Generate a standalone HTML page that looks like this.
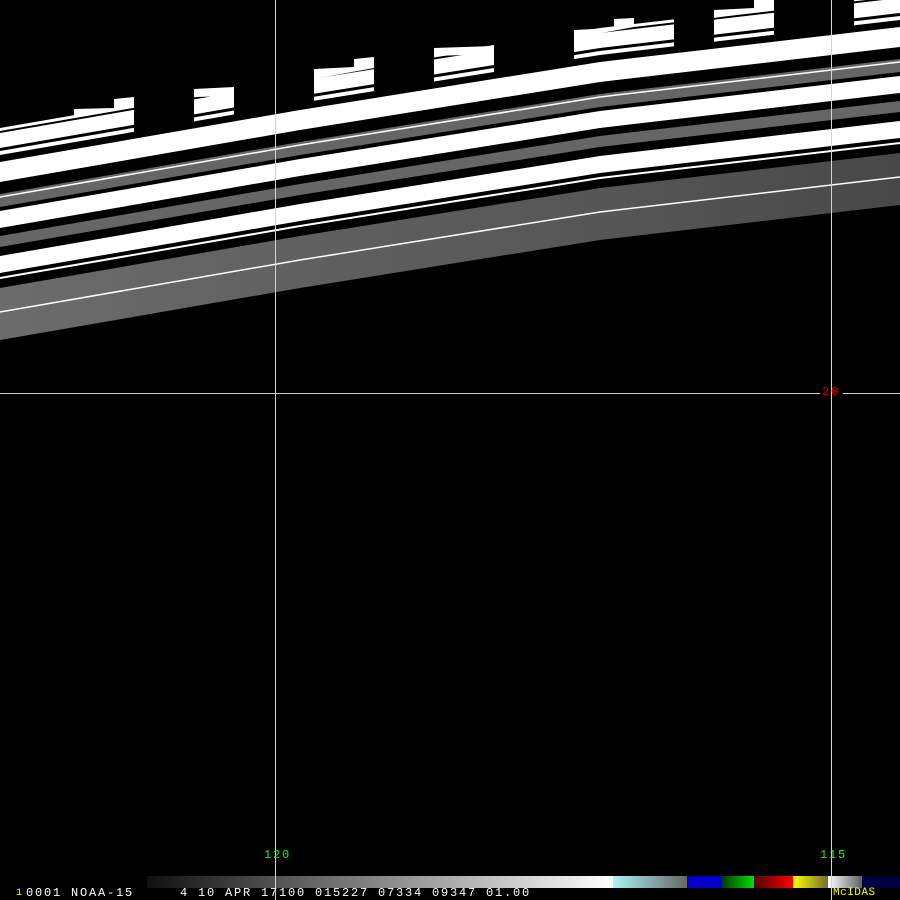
<!DOCTYPE html>
<html><head><meta charset="utf-8"><style>
html,body{margin:0;padding:0;background:#000;}
#c{position:relative;width:900px;height:900px;overflow:hidden;background:#000;}
.t{position:absolute;font-family:"Liberation Mono",monospace;font-size:12px;letter-spacing:1.8px;line-height:12px;white-space:pre;}
</style></head><body><div id="c">
<svg width="900" height="900" style="position:absolute;left:0;top:0">
<defs>
<linearGradient id="gg" x1="0" x2="1" y1="0" y2="0">
<stop offset="0" stop-color="#6c6c6c"/><stop offset="0.4" stop-color="#5e5e5e"/><stop offset="0.7" stop-color="#555"/><stop offset="1" stop-color="#484848"/>
</linearGradient>
<linearGradient id="cb1" x1="0" x2="1"><stop offset="0" stop-color="#101010"/><stop offset="1" stop-color="#ffffff"/></linearGradient>
<linearGradient id="cb2" x1="0" x2="1"><stop offset="0" stop-color="#a8f4f4"/><stop offset="1" stop-color="#666"/></linearGradient>
<linearGradient id="cb3" x1="0" x2="1"><stop offset="0" stop-color="#004000"/><stop offset="1" stop-color="#00e000"/></linearGradient>
<linearGradient id="cb4" x1="0" x2="1"><stop offset="0" stop-color="#500000"/><stop offset="1" stop-color="#ff0000"/></linearGradient>
<linearGradient id="cb5" x1="0" x2="1"><stop offset="0" stop-color="#ffff00"/><stop offset="1" stop-color="#707030"/></linearGradient>
<linearGradient id="cb6" x1="0" x2="1"><stop offset="0" stop-color="#ffffff"/><stop offset="1" stop-color="#606060"/></linearGradient>
<clipPath id="seg">
<rect x="0" y="0" width="134" height="400"/>
<rect x="194" y="0" width="40" height="400"/>
<rect x="314" y="0" width="60" height="400"/>
<rect x="434" y="0" width="60" height="400"/>
<rect x="574" y="0" width="100" height="400"/>
<rect x="714" y="0" width="60" height="400"/>
<rect x="854" y="0" width="46" height="400"/>
</clipPath>
</defs>
<!-- gray swath -->
<polygon fill="url(#gg)" points="0,288 300,236 600,188 900,153 900,205 600,240 300,288 0,340"/>
<polyline fill="none" stroke="#fff" stroke-width="1.5" points="0,312 300,260 600,212 900,177"/>
<polyline fill="none" stroke="#fff" stroke-width="2" points="0,278 300,226 600,178 900,143"/>
<polygon fill="#fff" points="0,256 300,204 600,156 900,121 900,138 600,173 300,221 0,273"/>
<polygon fill="#666" points="0,236 300,184 600,136 900,101 900,112 600,147 300,195 0,247"/>
<polygon fill="#fff" points="0,211 300,159 600,111 900,76 900,93 600,128 300,176 0,228"/>
<polygon fill="#666" points="0,194 300,142 600,94 900,59 900,72 600,107 300,155 0,207"/>
<polyline fill="none" stroke="#fff" stroke-width="1.5" points="0,197 300,145 600,97 900,62"/>
<polygon fill="#fff" points="0,162 300,110 600,62 900,27 900,47 600,82 300,130 0,182"/>
<g clip-path="url(#seg)">
<polygon fill="#fff" points="0,151 300,99 600,51 900,16 900,20 600,55 300,103 0,155"/>
<polygon fill="#fff" points="0,133 300,81 600,33 900,-2 900,13 600,48 300,96 0,148"/>
<polygon fill="#fff" points="0,128 300,76 600,28 900,-7 900,-4 600,31 300,79 0,131"/>
</g>
<!-- step blocks (raised parts) -->
<polygon fill="#fff" points="74,109 114,108 114,99 134,97 134,106 74,117"/>
<polygon fill="#fff" points="194,89 234,87 234,96 194,97"/>
<polygon fill="#fff" points="314,69 354,67 354,59 374,57 374,68 314,79"/>
<polygon fill="#fff" points="434,48 494,46 494,54 434,56"/>
<polygon fill="#fff" points="574,30 614,28 614,19 634,18 634,27 574,38"/>
<polygon fill="#fff" points="714,10 754,8 754,0 774,0 774,8 714,18"/>
<polygon fill="#fff" points="854,6 900,1 900,12 854,18"/>
<!-- grid -->
<line x1="275.5" y1="0" x2="275.5" y2="900" stroke="#b8e0e0" stroke-width="1"/>
<line x1="831.5" y1="0" x2="831.5" y2="900" stroke="#b8e0e0" stroke-width="1"/>
<line x1="0" y1="393.5" x2="820" y2="393.5" stroke="#b8e0e0" stroke-width="1"/>
<line x1="843" y1="393.5" x2="900" y2="393.5" stroke="#b8e0e0" stroke-width="1"/>
<!-- colorbar -->
<rect x="147" y="876" width="466" height="12" fill="url(#cb1)"/>
<rect x="613" y="876" width="74" height="12" fill="url(#cb2)"/>
<rect x="687" y="876" width="35" height="12" fill="#0000c8"/>
<rect x="722" y="876" width="32" height="12" fill="url(#cb3)"/>
<rect x="754" y="876" width="39" height="12" fill="url(#cb4)"/>
<rect x="793" y="876" width="35" height="12" fill="url(#cb5)"/>
<rect x="828" y="876" width="34" height="12" fill="url(#cb6)"/>
<rect x="862" y="876" width="38" height="12" fill="#000040"/>
<line x1="275.5" y1="862" x2="275.5" y2="888" stroke="#b8e0e0"/>
<line x1="831.5" y1="862" x2="831.5" y2="888" stroke="#b8e0e0"/>
</svg>
<div class="t" style="left:822px;top:386px;color:#e00000">20</div>
<div class="t" style="left:264px;top:849px;color:#00ff00">120</div>
<div class="t" style="left:820px;top:849px;color:#00ff00">115</div>
<div class="t" style="left:16px;top:888px;color:#ffff00;font-size:10px">1</div>
<div class="t" style="left:26px;top:887px;color:#fff">0001 NOAA-15</div>
<div class="t" style="left:180px;top:887px;color:#fff">4 10 APR 17100 015227 07334 09347 01.00</div>
<div class="t" style="left:833px;top:887px;color:#ffff00;font-size:11px;letter-spacing:0.5px">McIDAS</div>
</div></body></html>
